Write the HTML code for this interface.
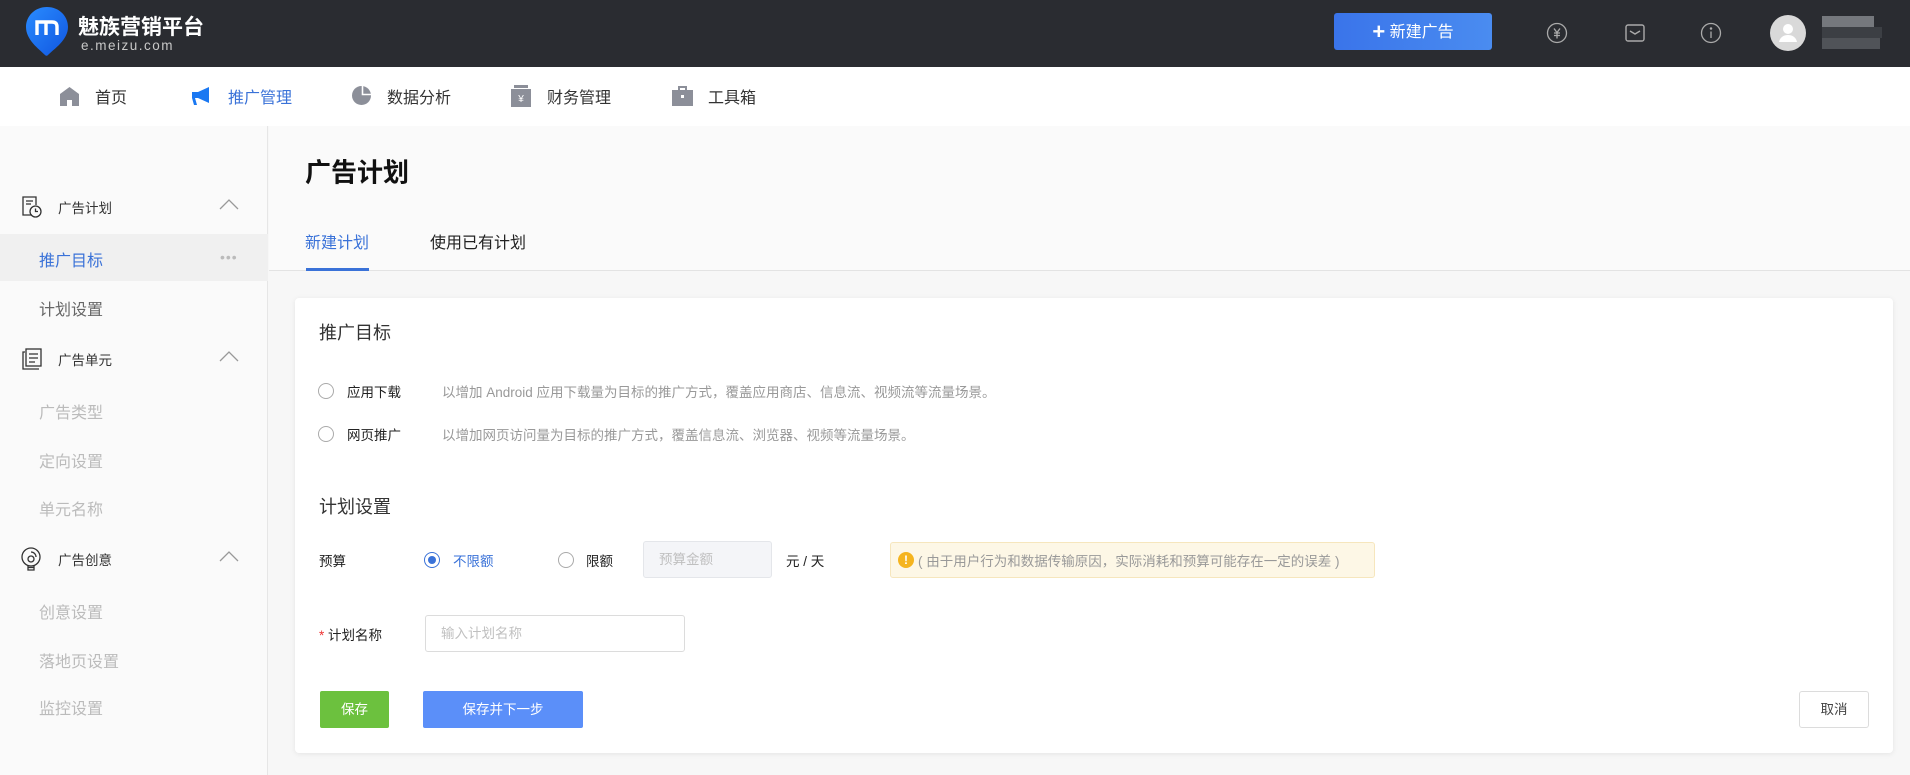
<!DOCTYPE html>
<html><head><meta charset="utf-8"><style>
*{margin:0;padding:0;box-sizing:border-box}
body{width:1910px;height:775px;overflow:hidden;background:#f7f7f7;font-family:"Liberation Sans","Noto Sans CJK SC",sans-serif;color:#333;position:relative}
.a{position:absolute;white-space:nowrap}
.hdr{position:absolute;left:0;top:0;width:1910px;height:67px;background:#2a2c31}
.nav{position:absolute;left:0;top:67px;width:1910px;height:59px;background:#fff}
.side{position:absolute;left:0;top:126px;width:268px;height:649px;background:#fafafa;border-right:1px solid #e6e6e6}
.card{position:absolute;left:295px;top:298px;width:1598px;height:455px;background:#fff;border-radius:4px;box-shadow:0 1px 6px rgba(0,0,0,.08)}
.radio{position:absolute;width:16px;height:16px;border:1px solid #aaa;border-radius:50%;background:#fff}
.t{transform:translateY(-50%)}
</style></head><body>
<div class="hdr"></div>
<svg class="a" style="left:24px;top:5px" width="46" height="52" viewBox="0 0 46 52"><defs><linearGradient id="g" x1="0" y1="0" x2="1" y2="1"><stop offset="0" stop-color="#2a8cff"/><stop offset="1" stop-color="#1055e0"/></linearGradient></defs><path d="M23 2C11 2 2 11 2 22c0 13 13 22 19 28 1 1 2 1 3 0 6-6 20-15 20-28C44 11 35 2 23 2z" fill="url(#g)"/><path d="M13 30V17h15c4 0 5 2 5 5v8M22 17v13" stroke="#fff" stroke-width="3.4" fill="none"/></svg>
<div class="a" style="left:78px;top:11px;font-size:21px;font-weight:bold;color:#fff">魅族营销平台</div>
<div class="a" style="left:81px;top:38px;font-size:13.5px;color:#c8c8c8;letter-spacing:1.5px">e.meizu.com</div>
<div class="a" style="left:1334px;top:13px;width:158px;height:37px;border-radius:3px;background:linear-gradient(90deg,#3a74ea,#4a8cf0);color:#fff;font-size:16px;line-height:37px;text-align:center"><b style="font-size:22px;vertical-align:-2px">+</b> 新建广告</div>
<svg class="a" style="left:1546px;top:22px" width="22" height="22" viewBox="0 0 22 22" fill="none" stroke="#aaa" stroke-width="1.3"><circle cx="11" cy="11" r="9.5"/><path d="M8 6.5l3 4 3-4M11 10.5v6M8 11h6M8 13.5h6"/></svg>
<svg class="a" style="left:1624px;top:22px" width="22" height="22" viewBox="0 0 22 22" fill="none" stroke="#aaa" stroke-width="1.4"><rect x="2" y="3" width="18" height="16" rx="2"/><path d="M6 9l5 3 5-3"/></svg>
<svg class="a" style="left:1700px;top:22px" width="22" height="22" viewBox="0 0 22 22" fill="none" stroke="#aaa" stroke-width="1.3"><circle cx="11" cy="11" r="9.5"/><path d="M11 9.5v6.5"/><circle cx="11" cy="6.5" r=".6" fill="#aaa"/></svg>
<div class="a" style="left:1770px;top:15px;width:36px;height:36px;border-radius:50%;background:#d9d9d9"><svg width="36" height="36" viewBox="0 0 36 36"><circle cx="18" cy="14" r="5" fill="#fff"/><path d="M9 27c1-5 5-7 9-7s8 2 9 7z" fill="#fff"/></svg></div>
<div class="a" style="left:1822px;top:16px;width:52px;height:11px;background:#75787d"></div>
<div class="a" style="left:1822px;top:27px;width:60px;height:11px;background:#3c3f44"></div>
<div class="a" style="left:1822px;top:38px;width:58px;height:11px;background:#505358"></div>

<div class="nav"></div>
<svg class="a" style="left:59px;top:86px" width="21" height="20" viewBox="0 0 21 20"><path d="M10.5 1L1 8v12h7v-6h5v6h7V8z" fill="#8c8f99"/></svg>
<div class="a t" style="left:95px;top:96px;font-size:16px;color:#333">首页</div>
<svg class="a" style="left:191px;top:86px" width="22" height="20" viewBox="0 0 22 20"><path d="M1 6h6l11-5v16L7 12H4l2 7H3L1 12z" fill="#1a78f2"/></svg>
<div class="a t" style="left:228px;top:96px;font-size:16px;color:#3a72d8">推广管理</div>
<svg class="a" style="left:351px;top:85px" width="21" height="21" viewBox="0 0 21 21"><circle cx="10.5" cy="10.5" r="9.5" fill="#8c8f99"/><path d="M11.5 0v9.5H21" stroke="#fff" stroke-width="1.6" fill="none"/></svg>
<div class="a t" style="left:387px;top:96px;font-size:16px;color:#333">数据分析</div>
<svg class="a" style="left:511px;top:85px" width="20" height="22" viewBox="0 0 20 22"><rect x="3" y="0" width="14" height="3" fill="#8c8f99"/><rect x="0" y="4" width="20" height="18" fill="#8c8f99"/><text x="10" y="17" font-size="10" fill="#fff" text-anchor="middle" font-family="Liberation Sans">¥</text></svg>
<div class="a t" style="left:547px;top:96px;font-size:16px;color:#333">财务管理</div>
<svg class="a" style="left:672px;top:86px" width="21" height="20" viewBox="0 0 21 20"><path d="M7 4V1h7v3" stroke="#8c8f99" stroke-width="2" fill="none"/><rect x="0" y="4" width="21" height="16" fill="#8c8f99"/><rect x="9" y="9" width="3" height="3" fill="#fff"/></svg>
<div class="a t" style="left:708px;top:96px;font-size:16px;color:#333">工具箱</div>

<div class="side"></div>
<div class="a" style="left:0;top:234px;width:268px;height:47px;background:#f0f0f0"></div>
<svg class="a" style="left:21px;top:196px" width="22" height="23" viewBox="0 0 22 23" fill="none" stroke="#333" stroke-width="1.3"><path d="M11 19H2V1h13v8"/><path d="M5 5h7M5 8h5"/><circle cx="14.5" cy="15.5" r="5.5"/><path d="M14.5 12.5v3h2.5"/></svg>
<div class="a t" style="left:58px;top:207px;font-size:13.5px;color:#333">广告计划</div>
<svg class="a" style="left:219px;top:199px" width="20" height="11" viewBox="0 0 20 11"><path d="M1 10l9-9 9 9" stroke="#999" stroke-width="1.3" fill="none"/></svg>
<div class="a t" style="left:39px;top:259px;font-size:16px;color:#3a72d8">推广目标</div>
<div class="a t" style="left:220px;top:257px;font-size:14px;color:#bbb;letter-spacing:1px">•••</div>
<div class="a t" style="left:39px;top:308px;font-size:16px;color:#666">计划设置</div>
<svg class="a" style="left:22px;top:348px" width="21" height="22" viewBox="0 0 21 22" fill="none" stroke="#333" stroke-width="1.3"><path d="M3 4H1v17h16"/><rect x="4" y="1" width="15" height="17"/><path d="M7 6h9M7 10h9M7 14h6"/></svg>
<div class="a t" style="left:58px;top:359px;font-size:13.5px;color:#333">广告单元</div>
<svg class="a" style="left:219px;top:351px" width="20" height="11" viewBox="0 0 20 11"><path d="M1 10l9-9 9 9" stroke="#999" stroke-width="1.3" fill="none"/></svg>
<div class="a t" style="left:39px;top:411px;font-size:16px;color:#bbb">广告类型</div>
<div class="a t" style="left:39px;top:460px;font-size:16px;color:#bbb">定向设置</div>
<div class="a t" style="left:39px;top:508px;font-size:16px;color:#bbb">单元名称</div>
<svg class="a" style="left:20px;top:547px" width="22" height="24" viewBox="0 0 22 24" fill="none" stroke="#333" stroke-width="1.3"><circle cx="11" cy="10" r="9"/><circle cx="11" cy="12" r="3"/><path d="M11 5a5 5 0 0 1 5 5M8 18v5h6v-5M8 20.5h6"/></svg>
<div class="a t" style="left:58px;top:559px;font-size:13.5px;color:#333">广告创意</div>
<svg class="a" style="left:219px;top:551px" width="20" height="11" viewBox="0 0 20 11"><path d="M1 10l9-9 9 9" stroke="#999" stroke-width="1.3" fill="none"/></svg>
<div class="a t" style="left:39px;top:611px;font-size:16px;color:#bbb">创意设置</div>
<div class="a t" style="left:39px;top:660px;font-size:16px;color:#bbb">落地页设置</div>
<div class="a t" style="left:39px;top:707px;font-size:16px;color:#bbb">监控设置</div>

<div class="a" style="left:269px;top:126px;width:1641px;height:145px;background:#fafafa;border-bottom:1px solid #e3e3e3"></div>
<div class="a t" style="left:305px;top:171px;font-size:26px;font-weight:bold;color:#111">广告计划</div>
<div class="a t" style="left:305px;top:241px;font-size:16px;color:#3a72d8">新建计划</div>
<div class="a" style="left:306px;top:268px;width:63px;height:3px;background:#3a72d8"></div>
<div class="a t" style="left:430px;top:241px;font-size:16px;color:#222">使用已有计划</div>

<div class="card"></div>
<div class="a t" style="left:319px;top:332px;font-size:18px;color:#333">推广目标</div>
<div class="radio" style="left:318px;top:383px"></div>
<div class="a t" style="left:347px;top:391px;font-size:13.5px;color:#222">应用下载</div>
<div class="a t" style="left:442px;top:391px;font-size:13.5px;color:#999">以增加 Android 应用下载量为目标的推广方式，覆盖应用商店、信息流、视频流等流量场景。</div>
<div class="radio" style="left:318px;top:426px"></div>
<div class="a t" style="left:347px;top:434px;font-size:13.5px;color:#222">网页推广</div>
<div class="a t" style="left:442px;top:434px;font-size:13.5px;color:#999">以增加网页访问量为目标的推广方式，覆盖信息流、浏览器、视频等流量场景。</div>
<div class="a t" style="left:319px;top:506px;font-size:18px;color:#333">计划设置</div>
<div class="a t" style="left:319px;top:560px;font-size:13.5px;color:#222">预算</div>
<div class="radio" style="left:424px;top:552px;border-color:#3a72d8"><div style="position:absolute;left:3px;top:3px;width:8px;height:8px;border-radius:50%;background:#3a72d8"></div></div>
<div class="a t" style="left:453px;top:560px;font-size:13.5px;color:#3a72d8">不限额</div>
<div class="radio" style="left:558px;top:552px"></div>
<div class="a t" style="left:586px;top:560px;font-size:13.5px;color:#222">限额</div>
<div class="a" style="left:643px;top:541px;width:129px;height:37px;background:#f4f5f8;border:1px solid #e4e6ea;border-radius:3px;font-size:13.5px;color:#c0c0c0;line-height:35px;padding-left:15px">预算金额</div>
<div class="a t" style="left:786px;top:560px;font-size:13.5px;color:#222">元 / 天</div>
<div class="a" style="left:890px;top:542px;width:485px;height:36px;background:#fdf7e6;border:1px solid #f6e6bd;border-radius:3px"></div>
<div class="a" style="left:898px;top:552px;width:16px;height:16px;border-radius:50%;background:#f5b41f;color:#fff;font-size:12px;font-weight:bold;text-align:center;line-height:16px">!</div>
<div class="a t" style="left:918px;top:560px;font-size:13.5px;color:#999">( 由于用户行为和数据传输原因，实际消耗和预算可能存在一定的误差 )</div>
<div class="a t" style="left:319px;top:634px;font-size:13.5px;color:#222"><span style="color:#e33">*</span> 计划名称</div>
<div class="a" style="left:425px;top:615px;width:260px;height:37px;border:1px solid #dcdcdc;border-radius:3px;font-size:13.5px;color:#c0c0c0;line-height:35px;padding-left:15px">输入计划名称</div>
<div class="a" style="left:320px;top:691px;width:69px;height:37px;background:#6cc13e;border-radius:2px;color:#fff;font-size:13.5px;line-height:37px;text-align:center">保存</div>
<div class="a" style="left:423px;top:691px;width:160px;height:37px;background:#5b8ff9;border-radius:2px;color:#fff;font-size:13.5px;line-height:37px;text-align:center">保存并下一步</div>
<div class="a" style="left:1799px;top:691px;width:70px;height:37px;background:#fff;border:1px solid #dcdcdc;border-radius:3px;color:#444;font-size:13.5px;line-height:35px;text-align:center">取消</div>
</body></html>
